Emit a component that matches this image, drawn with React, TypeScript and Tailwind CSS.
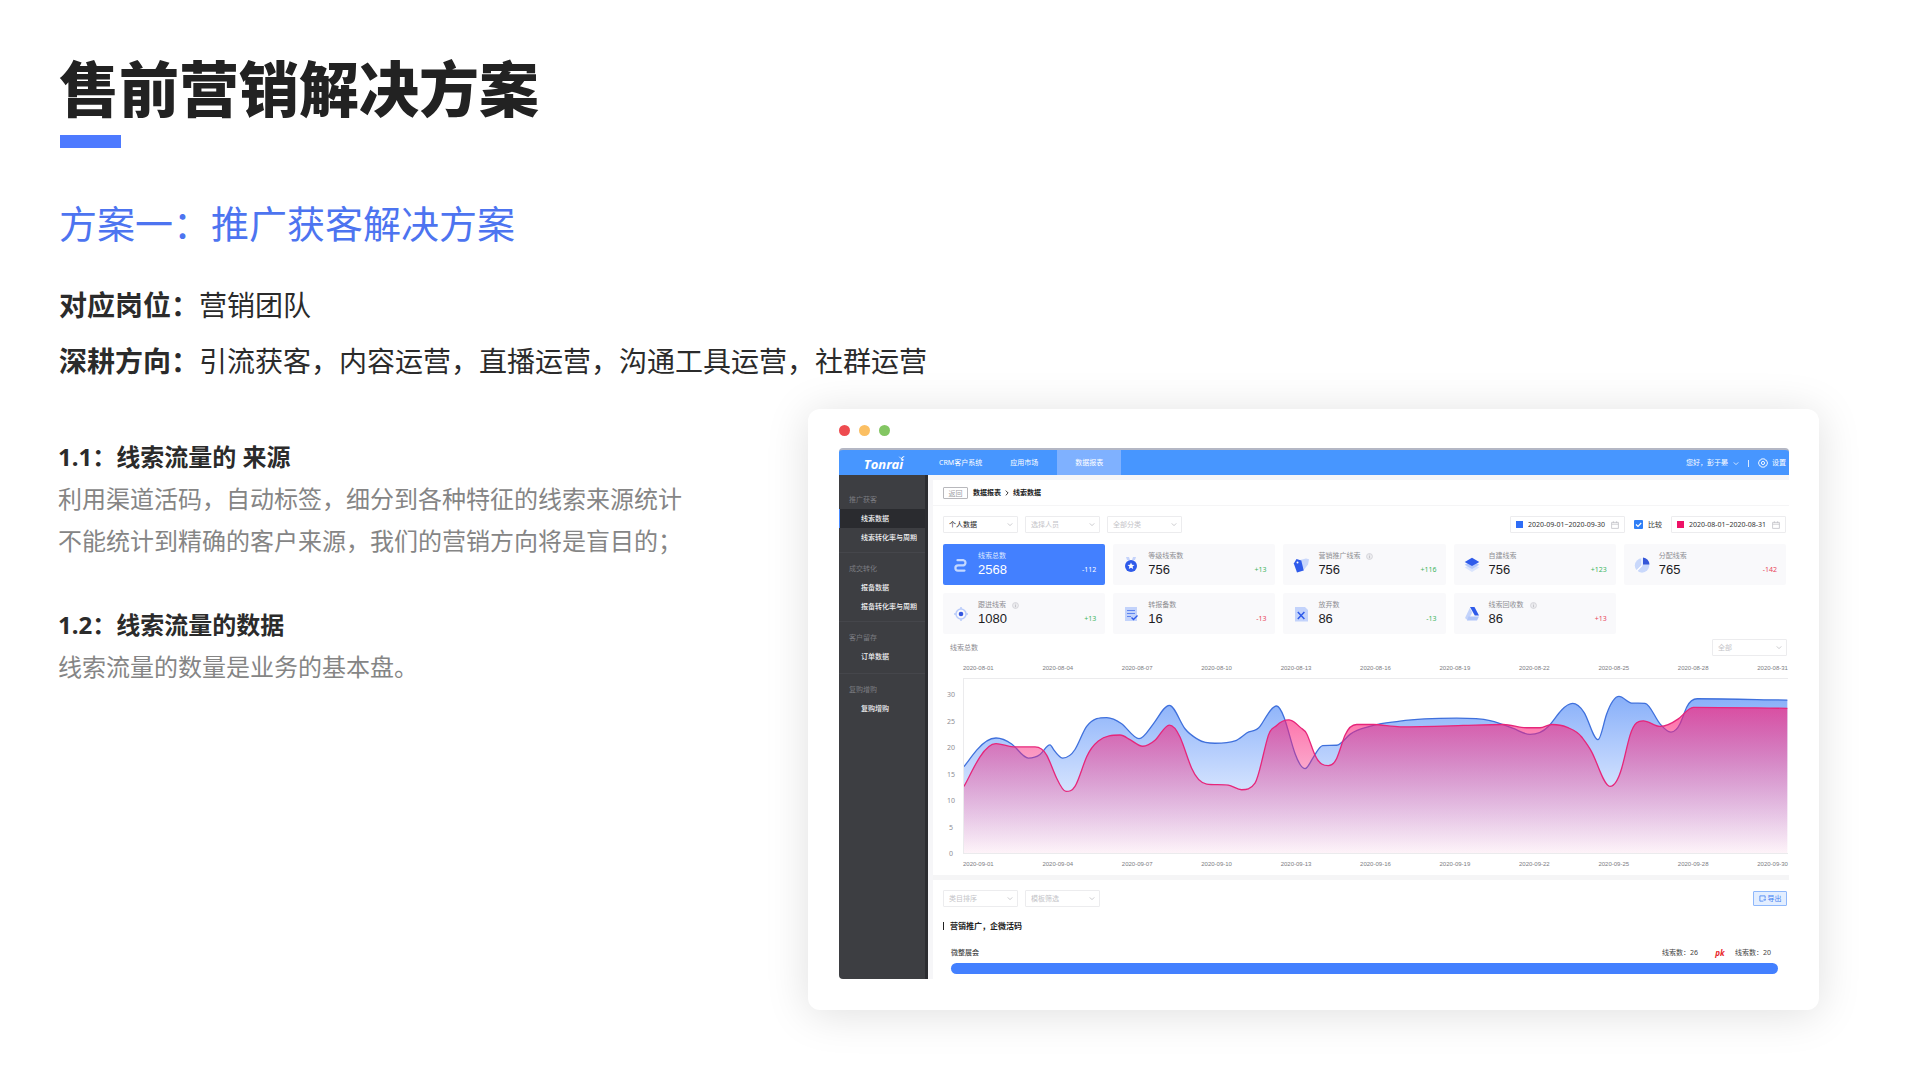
import React from "react";

type Point = [number, number];

const BLUE: Point[] = [
  [0, 266], [38, 216], [96, 179], [143, 197], [193, 240], [228, 229], [258, 200], [270, 216], [296, 240], [333, 214],
  [368, 144], [428, 117], [473, 136], [525, 181], [568, 136], [616, 80], [663, 151], [703, 184], [753, 195], [813, 188],
  [848, 164], [888, 144], [913, 104], [938, 82], [960, 116], [993, 226], [1023, 272], [1046, 241], [1076, 202], [1118, 201],
  [1158, 168], [1228, 141], [1308, 128], [1478, 119], [1578, 126], [1648, 150], [1698, 168], [1753, 144], [1793, 94],
  [1826, 74], [1860, 101], [1902, 184], [1928, 106], [1965, 53], [2003, 73], [2043, 74], [2088, 136], [2121, 161],
  [2148, 136], [2168, 86], [2200, 60], [2470, 64],
];

const PINK: Point[] = [
  [0, 326], [48, 236], [96, 196], [148, 206], [213, 206], [248, 231], [278, 301], [306, 341], [333, 326], [368, 236],
  [403, 188], [468, 170], [498, 184], [536, 204], [573, 186], [616, 140], [648, 176], [683, 271], [728, 319], [793, 322],
  [833, 336], [873, 316], [893, 251], [913, 171], [938, 141], [975, 124], [1008, 146], [1028, 166], [1053, 231],
  [1093, 263], [1118, 241], [1143, 171], [1178, 138], [1228, 138], [1308, 145], [1498, 141], [1618, 138], [1688, 148],
  [1728, 148], [1763, 138], [1808, 146], [1853, 176], [1883, 221], [1938, 326], [1973, 271], [1998, 171], [2038, 127],
  [2088, 144], [2143, 121], [2188, 86], [2470, 89],
];

// Monotone cubic interpolation through the data points.
function smooth(points: Point[]): string {
  const n = points.length;
  const slopes: number[] = [];
  for (let i = 0; i < n - 1; i++) {
    slopes.push((points[i + 1][1] - points[i][1]) / (points[i + 1][0] - points[i][0]));
  }
  const tangents = points.map((_, i) => {
    if (i === 0) return slopes[0];
    if (i === n - 1) return slopes[n - 2];
    const a = slopes[i - 1];
    const b = slopes[i];
    if (a * b <= 0) return 0;
    const before = points[i][0] - points[i - 1][0];
    const after = points[i + 1][0] - points[i][0];
    const mean = (a * after + b * before) / (before + after);
    return Math.sign(a) * Math.min(1.15 * Math.abs(mean), 3 * Math.abs(a), 3 * Math.abs(b));
  });
  let d = `M${points[0][0]} ${points[0][1]}`;
  for (let i = 0; i < n - 1; i++) {
    const [x0, y0] = points[i];
    const [x1, y1] = points[i + 1];
    const h = (x1 - x0) / 3;
    d += `C${x0 + h} ${y0 + h * tangents[i]} ${x1 - h} ${y1 - h * tangents[i + 1]} ${x1} ${y1}`;
  }
  return d;
}

function Chevron({ className }: { className: string }) {
  return (
    <svg viewBox="0 0 8 6" className={className} fill="none" stroke="currentColor" strokeWidth="1" aria-hidden="true">
      <path d="M1 1.5 4 4.5 7 1.5" />
    </svg>
  );
}

function Select({ label, value, strong }: { label: string; value: string; strong?: boolean }) {
  return (
    <div className="relative w-[75px]">
      <select
        aria-label={label}
        className={
          "block h-[17px] w-full appearance-none rounded-[1px] border border-[#ececee] bg-white px-[5px] text-[7px] leading-[14px] " +
          (strong ? "text-[#222]" : "text-[#c4c4c8]")
        }
      >
        <option>{value}</option>
      </select>
      <Chevron className="pointer-events-none absolute right-[5px] top-[6px] h-[5px] w-[6px] text-[#b9b9bd]" />
    </div>
  );
}

function DateRange({ label, value, swatch }: { label: string; value: string; swatch: string }) {
  return (
    <div className="flex h-[17px] w-[115px] items-center rounded-[1px] border border-[#ececee] bg-white pl-[5px] pr-[5px]">
      <span className={"mr-[5px] size-[7px] shrink-0 " + swatch} />
      <input type="text" aria-label={label} readOnly value={value} className="w-full min-w-0 text-[7px] leading-[14px] text-[#333]" />
      <svg viewBox="0 0 8 8" className="size-[8px] shrink-0 text-[#c2c2c6]" fill="none" stroke="currentColor" strokeWidth="0.8" aria-hidden="true">
        <path d="M.6 1.4h6.8v6H.6zM.6 3.2h6.8M2.4.3v1.6M5.6.3v1.6" />
      </svg>
    </div>
  );
}

const icons: Record<string, React.ReactNode> = {
  route: (
    <path d="M4.500 3.200H10.500a2.700 2.700 0 0 1 0 5.200H5a2.600 2.600 0 0 0 0 5.200h6.500" fill="none" stroke="#c4d8ff" strokeWidth="2.200" strokeLinecap="round" />
  ),
  medal: (
    <>
      <path d="M3 0h3l1 3H4zM13 0h-3L9 3h3z" fill="#c5d3fb" />
      <circle cx="8" cy="9" r="6" fill="#2f5bea" />
      <path d="m8 5.500 1 2.300 2.500.2-1.900 1.600.6 2.400L8 10.700 5.800 12l.6-2.400L4.500 8 7 7.800z" fill="#fff" />
    </>
  ),
  tags: (
    <>
      <path d="m7 3 6-1.500 3 .8-1 5.200-5 6.500z" fill="#c9d7fb" />
      <path d="M.8 6.500 3.500 2l4.800 1.600 2.400 10L4 15.500z" fill="#2f5bea" />
      <circle cx="4.500" cy="5.500" r="1" fill="#fff" />
    </>
  ),
  layers: (
    <>
      <path d="m8 6.500 7.300 4L8 15 .7 10.500z" fill="#dbe5fd" />
      <path d="m8 3.500 7.300 4.200L8 12 .7 7.700z" fill="#b5c9fa" />
      <path d="m8 .8 7.300 4.100L8 9 .7 4.900z" fill="#2f5bea" />
    </>
  ),
  pie: (
    <>
      <circle cx="8" cy="8.500" r="7.200" fill="#c9d8fb" />
      <path d="M8 8.500 2.600 14M8 8.500V1.300" stroke="#fff" strokeWidth="1.200" />
      <path d="M9 7.500V.5a7.200 7.200 0 0 1 6.500 7z" fill="#3557d8" />
    </>
  ),
  target: (
    <>
      <circle cx="8" cy="8" r="5" fill="none" stroke="#b9cbfa" strokeWidth="1.500" />
      <path d="M8 1v2M8 13v2M1 8h2M13 8h2" stroke="#b9cbfa" strokeWidth="1.500" />
      <circle cx="8" cy="8" r="2.300" fill="#3557e0" />
    </>
  ),
  report: (
    <>
      <path d="M2 1h12v14H2z" fill="#c3d3fb" />
      <path d="M4 4.500h8M4 7.500h8M4 10.500h4" stroke="#5f85f0" strokeWidth="1.100" />
      <path d="m8.500 11.500 2 2 4-4" fill="none" stroke="#2f5bea" strokeWidth="1.400" />
    </>
  ),
  abandon: (
    <>
      <path d="M2 1h10l3 3v11.500H2z" fill="#c3d3fb" />
      <path d="m4.800 6 6.600 7M11.400 6l-6.600 7" stroke="#2f5bea" strokeWidth="1.500" />
    </>
  ),
  recycle: (
    <>
      <path d="M5.800 2 8.200 6.500 4 14.500l-3-2.500z" fill="#c3d3fb" />
      <path d="M4.500 10.500H15l-2 4H3z" fill="#b1c6f9" />
      <path d="M6 1h4.500l4.500 8.500h-4.200z" fill="#2f5bea" />
    </>
  ),
};

type Stat = { icon: string; label: string; value: string; delta: string; tone: string; info?: boolean; active?: boolean };

const GREEN = "text-[#3cb55d]";
const RED = "text-[#e8445a]";

const STATS: Stat[] = [
  { icon: "route", label: "线索总数", value: "2568", delta: "-112", tone: "text-white", active: true },
  { icon: "medal", label: "等级线索数", value: "756", delta: "+13", tone: GREEN },
  { icon: "tags", label: "营销推广线索", value: "756", delta: "+116", tone: GREEN, info: true },
  { icon: "layers", label: "自建线索", value: "756", delta: "+123", tone: GREEN },
  { icon: "pie", label: "分配线索", value: "765", delta: "-142", tone: RED },
  { icon: "target", label: "跟进线索", value: "1080", delta: "+13", tone: GREEN, info: true },
  { icon: "report", label: "转报备数", value: "16", delta: "-13", tone: RED },
  { icon: "abandon", label: "放弃数", value: "86", delta: "-13", tone: GREEN },
  { icon: "recycle", label: "线索回收数", value: "86", delta: "+13", tone: RED, info: true },
];

function StatCard({ icon, label, value, delta, tone, info, active }: Stat) {
  return (
    <div className={"flex h-[41px] items-center rounded-[2px] pl-[10px] pr-[9px] " + (active ? "bg-[#4380ff]" : "bg-[#f9f9fb]")}>
      <svg viewBox="0 0 16 16" className="mr-[9px] size-[16px] shrink-0" aria-hidden="true">{icons[icon]}</svg>
      <div className="min-w-0 flex-1">
        <div className={"flex items-center gap-[6px] text-[7px] leading-[10px] " + (active ? "text-[#dbe7ff]" : "text-[#8f8f94]")}>
          {label}
          {info && (
            <svg viewBox="0 0 8 8" className="size-[7px]" aria-hidden="true">
              <circle cx="4" cy="4" r="3.400" fill="#ececef" stroke="#cdcdd2" strokeWidth="0.800" />
              <path d="M4 3.500V6M4 2v.8" stroke="#b5b5ba" strokeWidth="0.800" />
            </svg>
          )}
        </div>
        <div className="flex items-center justify-between">
          <span className={"font-['Liberation_Sans',sans-serif] text-[13px] leading-[17px] " + (active ? "text-white" : "text-[#1c1c1f]")}>{value}</span>
          <span className={"text-[7px] leading-[10px] " + tone}>{delta}</span>
        </div>
      </div>
    </div>
  );
}

const MENU = [
  { title: "推广获客", items: ["线索数据", "线索转化率与周期"] },
  { title: "成交转化", items: ["报备数据", "报备转化率与周期"] },
  { title: "客户留存", items: ["订单数据"] },
  { title: "复购增购", items: ["复购增购"] },
];

function Sidebar() {
  return (
    <aside className="w-[89px] shrink-0 rounded-bl-[4px] border-r-[3px] border-[#2c2d31] bg-[#3d3e42] pt-[15px]">
      {MENU.map((group, g) => (
        <div key={group.title} className={g ? "border-t border-[#45464b] pt-[6px]" : ""}>
          <h4 className="pl-[10px] text-[7px] leading-[19px] text-[#7b7c81]">{group.title}</h4>
          <ul className={group.items.length > 1 ? "pb-[5px]" : "pb-[7px]"}>
            {group.items.map((item, i) => (
              <li key={item}>
                <a
                  href="#"
                  className={
                    "block border-l pl-[21px] text-[7px] font-medium leading-[19px] text-[#f1f1f3] " +
                    (g === 0 && i === 0 ? "border-[#4a8bff] bg-[#2a2b2f]" : "border-transparent")
                  }
                >
                  {item}
                </a>
              </li>
            ))}
          </ul>
        </div>
      ))}
    </aside>
  );
}

function TopBar() {
  return (
    <header className="flex h-[27px] items-stretch rounded-t-[4px] border-t-2 border-[#b4b7c4] bg-[#4796ff] text-[7px] text-white">
      <div className="flex w-[89px] items-center justify-center pt-[2px]">
        <span className="relative font-['Open_Sans',sans-serif] text-[13px] font-bold italic leading-[16px]">
          Tonrai
          <svg viewBox="0 0 8 5" className="absolute -right-[2px] top-0 h-[4px] w-[7px]" aria-hidden="true">
            <path d="M0 1c2 0 3 .6 3.500 2C4.500 1.500 6 .3 8 0 6.500 1.500 5 3 4.200 5 3.200 3 2 1.700 0 1z" fill="#fff" />
          </svg>
        </span>
      </div>
      <nav className="flex pt-px">
        <a href="#" className="flex items-center pl-[11px] pr-[14px]">CRM客户系统</a>
        <a href="#" className="flex items-center px-[14px]">应用市场</a>
        <a href="#" className="-mt-px ml-[5px] flex w-[64px] items-center justify-center bg-[#7fb1ff] pt-px">数据报表</a>
      </nav>
      <div className="ml-auto flex items-center pr-[3px] pt-px">
        <button type="button" className="flex items-center gap-[5px]">
          您好，彭于晏
          <Chevron className="h-[5px] w-[6px]" />
        </button>
        <span className="mx-[9px] h-[7px] w-px bg-white/80" />
        <button type="button" className="flex items-center gap-[4px]">
          <svg viewBox="0 0 10 10" className="size-[10px]" fill="none" stroke="currentColor" strokeWidth="0.900" aria-hidden="true">
            <path d="M3.400.9h3.200l.6 1.200 1.300.2 1 2.700-1 2.700-1.300.2-.6 1.200H3.400l-.6-1.200-1.300-.2L.5 5l1-2.700 1.300-.2z" />
            <circle cx="5" cy="5" r="1.600" />
          </svg>
          设置
        </button>
      </div>
    </header>
  );
}

const TOP_DATES = ["2020-08-01", "2020-08-04", "2020-08-07", "2020-08-10", "2020-08-13", "2020-08-16", "2020-08-19", "2020-08-22", "2020-08-25", "2020-08-28", "2020-08-31"];
const BOTTOM_DATES = ["2020-09-01", "2020-09-04", "2020-09-07", "2020-09-10", "2020-09-13", "2020-09-16", "2020-09-19", "2020-09-22", "2020-09-25", "2020-09-28", "2020-09-30"];

function Dates({ values }: { values: string[] }) {
  return (
    <div className="ml-[20px] flex justify-between font-['Liberation_Sans',sans-serif] text-[6px] leading-[10px] text-[#7c7c82]">
      {values.map((v) => <span key={v}>{v}</span>)}
    </div>
  );
}

function Chart() {
  const blue = smooth(BLUE);
  const pink = smooth(PINK);
  return (
    <div className="mt-[7px]">
      <Dates values={TOP_DATES} />
      <div className="mt-[5px] flex h-[176px]">
        <div className="-mb-[5px] flex w-[20px] shrink-0 flex-col justify-between pl-[4px] pt-[12px] text-[7px] leading-[10px] text-[#8e8e94]">
          {[30, 25, 20, 15, 10, 5, 0].map((v) => <span key={v} className="w-[8px] text-center">{v}</span>)}
        </div>
        <div className="min-w-0 flex-1 border-y border-l border-[#ebebed]">
          <svg viewBox="0 0 2472 528" preserveAspectRatio="none" className="block h-full w-full" role="img" aria-label="线索总数">
            <defs>
              <linearGradient id="blueFill" gradientUnits="userSpaceOnUse" x1="0" y1="50" x2="0" y2="528">
                <stop offset="0" stopColor="#3d7df5" stopOpacity="0.620" />
                <stop offset="1" stopColor="#5b93ff" stopOpacity="0" />
              </linearGradient>
              <linearGradient id="pinkFill" gradientUnits="userSpaceOnUse" x1="0" y1="86" x2="0" y2="528">
                <stop offset="0" stopColor="#ff1a75" stopOpacity="0.660" />
                <stop offset="1" stopColor="#e83c90" stopOpacity="0.060" />
              </linearGradient>
            </defs>
            <path d={blue + "L2470 528L0 528Z"} fill="url(#blueFill)" />
            <path d={blue} fill="none" stroke="#3f70dc" strokeWidth="1.300" vectorEffect="non-scaling-stroke" />
            <path d={pink + "L2470 528L0 528Z"} fill="url(#pinkFill)" />
            <path d={pink} fill="none" stroke="#e6267a" strokeWidth="1.300" vectorEffect="non-scaling-stroke" />
          </svg>
        </div>
      </div>
      <div className="mt-[5px]"><Dates values={BOTTOM_DATES} /></div>
    </div>
  );
}

function Dashboard() {
  return (
    <div>
      <TopBar />
      <div className="flex">
        <Sidebar />
        <main className="min-w-0 flex-1 border-l-[5px] border-t-[5px] border-[#f6f6f8] bg-white">
          <div className="flex h-[26px] items-center border-b border-[#f5f5f6] pl-[10px] pt-px text-[7px] font-bold text-[#222]">
            <button type="button" className="mr-[5px] h-[12px] w-[25px] rounded-[1px] border border-[#b8b8bc] font-normal leading-[9px] text-[#a0a0a5]">返回</button>
            <a href="#">数据报表</a>
            <svg viewBox="0 0 5 8" className="mx-[4px] h-[6px] w-[4px]" fill="none" stroke="currentColor" strokeWidth="1.200" aria-hidden="true"><path d="M.8.8 4 4 .8 7.200" /></svg>
            <span>线索数据</span>
          </div>
          <div className="pl-[10px]">
            <div className="mr-[3px] flex items-center pt-[10px]">
              <div className="flex gap-[7px]">
                <Select label="数据范围" value="个人数据" strong />
                <Select label="人员" value="选择人员" />
                <Select label="分类" value="全部分类" />
              </div>
              <div className="ml-auto flex items-center">
                <DateRange label="日期范围" value="2020-09-01~2020-09-30" swatch="bg-[#2f6df6]" />
                <label className="mx-[9px] flex items-center gap-[5px] text-[7px] leading-[10px] text-[#333]">
                  <span className="relative size-[9px]">
                    <input type="checkbox" defaultChecked className="block size-[9px] appearance-none rounded-[1px] bg-[#2f7ff6]" />
                    <svg viewBox="0 0 9 9" className="pointer-events-none absolute inset-0 size-[9px]" fill="none" stroke="#fff" strokeWidth="1.200" aria-hidden="true"><path d="m2 4.500 2 2 3.200-3.500" /></svg>
                  </span>
                  比较
                </label>
                <DateRange label="比较日期范围" value="2020-08-01~2020-08-31" swatch="bg-[#ee1166]" />
              </div>
            </div>
            <div className="mr-[3px] mt-[11px] grid grid-cols-5 gap-[8px]">
              {STATS.map((s, i) => <StatCard key={i} {...s} />)}
            </div>
            <div className="mr-[2px] mt-[5px] flex items-center justify-between pl-[7px]">
              <h3 className="text-[7px] leading-[10px] text-[#8c8c91]">线索总数</h3>
              <Select label="图表筛选" value="全部" />
            </div>
            <div className="mr-px"><Chart /></div>
          </div>
          <div className="mt-[6px] h-[5px] bg-[#f5f5f6]" />
          <div className="pl-[10px]">
            <div className="mr-[2px] flex items-center justify-between pt-[10px]">
              <div className="flex gap-[7px]">
                <Select label="排序" value="类目排序" />
                <Select label="筛选" value="模板筛选" />
              </div>
              <button type="button" className="flex h-[15px] w-[34px] items-center justify-center gap-[2px] rounded-[1px] border border-[#8fb8fb] bg-[#e3eeff] text-[7px] leading-[10px] text-[#3f7ff2]">
                <svg viewBox="0 0 8 8" className="size-[7px]" fill="none" stroke="currentColor" strokeWidth="0.900" aria-hidden="true"><path d="M5 7H1V1h6v3M5 5.500h2.500M6.500 4.500l1 1-1 1" /></svg>
                导出
              </button>
            </div>
            <h3 className="mt-[13px] flex items-center gap-[6px] text-[8px] font-bold leading-[12px] text-[#222]">
              <span className="h-[8px] w-px bg-[#222]" />
              营销推广，企微活码
            </h3>
            <div className="mt-[16px] pl-[8px] pr-[11px]">
              <div className="flex items-center text-[7px] leading-[10px] text-[#444]">
                <span className="font-medium">微整展会</span>
                <span className="ml-auto">线索数：26</span>
                <span className="ml-[14px] mr-[7px] w-[16px] text-center text-[8px] font-bold italic text-[#e8262c]">pk</span>
                <span className="pr-[7px]">线索数：20</span>
              </div>
              <div className="mb-[5px] mt-[5px] h-[11px] rounded-full bg-[#4380ff]" />
            </div>
          </div>
        </main>
      </div>
    </div>
  );
}

export default function App() {
  return (
    <div className="min-h-screen bg-white font-['Noto_Sans','Noto_Sans_CJK_SC',sans-serif] text-[#2b2b2b]">
      <div className="pl-[59px] pt-[53px]">
        <h1 className="text-[60px] font-black leading-[72px] text-[#222]">售前营销解决方案</h1>
        <div className="ml-px mt-[10px] h-[13px] w-[61px] bg-[#4d7aff]" />
        <h2 className="mt-[51px] text-[38px] leading-[48px] text-[#4d74f0]">方案一：推广获客解决方案</h2>
        <dl className="mt-[30px] text-[28px] leading-[56px]">
          <div className="flex">
            <dt className="font-bold">对应岗位：</dt>
            <dd>营销团队</dd>
          </div>
          <div className="flex">
            <dt className="font-bold">深耕方向：</dt>
            <dd>引流获客，内容运营，直播运营，沟通工具运营，社群运营</dd>
          </div>
        </dl>
      </div>
      <div className="mt-[20px] flex items-start pl-[58px] pr-[101px]">
        <div className="w-[750px] shrink-0 pt-[27px] text-[24px] leading-[42px] text-[#858585]">
          <section>
            <h3 className="font-bold text-[#2b2b2b]">1.1：线索流量的 来源</h3>
            <p>利用渠道活码，自动标签，细分到各种特征的线索来源统计</p>
            <p>不能统计到精确的客户来源，我们的营销方向将是盲目的；</p>
          </section>
          <section className="mt-[42px]">
            <h3 className="font-bold text-[#2b2b2b]">1.2：线索流量的数据</h3>
            <p>线索流量的数量是业务的基本盘。</p>
          </section>
        </div>
        <div className="min-w-0 flex-1 rounded-[12px] bg-white pb-[31px] pl-[31px] pr-[30px] shadow-[0_4px_44px_rgba(0,0,0,0.13)]">
          <div className="flex gap-[9px] pb-[12px] pt-[16px]">
            <span className="size-[11px] rounded-full bg-[#ee4b50]" />
            <span className="size-[11px] rounded-full bg-[#fbbf63]" />
            <span className="size-[11px] rounded-full bg-[#83c663]" />
          </div>
          <Dashboard />
        </div>
      </div>
    </div>
  );
}
